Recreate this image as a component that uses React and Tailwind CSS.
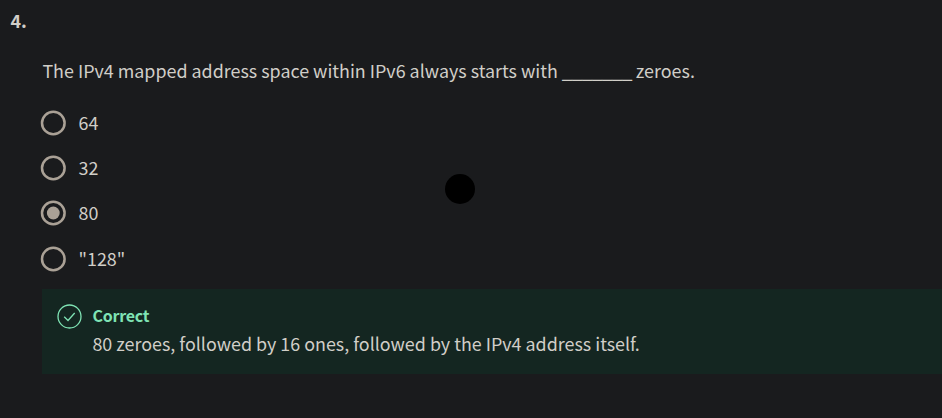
const options = [
  { label: '64', gap: 'mb-[19px]' },
  { label: '32', gap: 'mb-[19px]' },
  { label: '80', gap: 'mb-[20px]', selected: true },
  { label: '"128"', gap: 'mb-[17px]' },
];

function Option({ label, gap, selected }) {
  return (
    <li className={`flex h-[26px] items-center gap-[12.5px] ${gap}`}>
      <svg className="size-[26px] shrink-0" viewBox="0 0 26 26" fill="none">
        <circle cx="13.3" cy="13" r="11.3" stroke="#aaa196" strokeWidth="2.5" />
        {selected && <circle cx="13.3" cy="13" r="6.4" fill="#aaa196" />}
      </svg>
      <span className="pb-[2px]">{label}</span>
    </li>
  );
}

export default function App() {
  return (
    <main className="relative h-[418px] w-[942px] overflow-hidden bg-[#1a1b1d] font-['Noto_Sans_CJK_SC',sans-serif] text-[17.9px] leading-[26px] text-[#d1cec8]">
      <h2 className="pl-[10.4px] pt-[7px] text-[17.9px] font-bold">4.</h2>
      <section className="pl-[40px] pt-[24px]">
        <p className="ml-[2.4px] h-[26px] whitespace-nowrap">
          The IPv4 mapped address space within IPv6 always starts with{' '}
          <span className="text-[19.2px] leading-none tracking-[-0.73px]">_______</span> zeroes.
        </p>
        <ul className="pt-[27px]">
          {options.map((option) => (
            <Option key={option.label} {...option} />
          ))}
        </ul>
        <div className="ml-[2px] flex h-[85px] gap-[10.4px] bg-[#142621] pl-[15px] pt-[15px]">
          <svg className="size-[25px] shrink-0" viewBox="0 0 25 25" fill="none" stroke="#7fe3b4">
            <circle cx="12.5" cy="12.5" r="11.5" strokeWidth="1.3" />
            <path d="M7.2 12.8 L11 16.5 L17.7 9" strokeWidth="1.3" />
          </svg>
          <div className="-mt-px">
            <h3 className="text-[16px] font-bold leading-[24px] tracking-[-0.25px] text-[#7fe3b4]">Correct</h3>
            <p className="mt-[3px] whitespace-nowrap">
              80 zeroes, followed by 16 ones, followed by the IPv4 address itself.
            </p>
          </div>
        </div>
      </section>
      <div className="absolute left-[445px] top-[174px] size-[30px] rounded-full bg-black" />
    </main>
  );
}
